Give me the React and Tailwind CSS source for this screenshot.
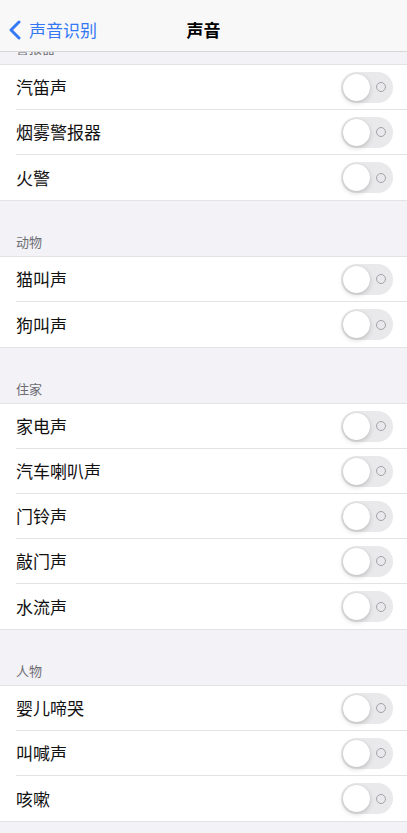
import React from 'react';

const sections = [
  { title: '动物', items: ['猫叫声', '狗叫声'] },
  { title: '住家', items: ['家电声', '汽车喇叭声', '门铃声', '敲门声', '水流声'] },
  { title: '人物', items: ['婴儿啼哭', '叫喊声', '咳嗽'] },
];

function Toggle() {
  return (
    <div className="relative w-[52px] h-[31px] rounded-full bg-[#e9e9eb] flex items-center shrink-0">
      <div className="ml-[2px] w-[27px] h-[27px] rounded-full bg-white shadow-[0_2px_5px_rgba(0,0,0,0.18),0_0_1px_rgba(0,0,0,0.15)]" />
      <div className="ml-[6px] w-[10px] h-[10px] rounded-full border border-[#a3a3a8]" />
    </div>
  );
}

function Row({ label, last }) {
  return (
    <div className="h-[45px] pl-4 flex">
      <div className={`flex-1 flex items-center justify-between pr-[14px] ${last ? '' : 'border-b border-[#e3e3e6]'}`}>
        <span className="text-[17px] text-[#111]">{label}</span>
        <Toggle />
      </div>
    </div>
  );
}

function Group({ items }) {
  return (
    <div className="bg-white border-y border-[#e3e3e6]">
      {items.map((it, i) => (
        <Row key={it} label={it} last={i === items.length - 1} />
      ))}
    </div>
  );
}

export default function App() {
  return (
    <div
      className="w-[407px] h-[833px] overflow-hidden bg-[#f2f2f7]"
      style={{ fontFamily: '"Noto Sans CJK SC", "Noto Sans", sans-serif' }}
    >
      <div className="h-[52px] bg-[#f8f8f8] border-b border-[#d6d6d8] flex items-center relative">
        <div className="flex items-center pl-[8px] pt-[8px] text-[#3478f6]">
          <svg width="14" height="20" viewBox="0 0 14 20" fill="none">
            <path d="M11 2 L3 10 L11 18" stroke="#3478f6" strokeWidth="3" strokeLinecap="round" strokeLinejoin="round" />
          </svg>
          <span className="ml-[7px] text-[17px]">声音识别</span>
        </div>
        <div className="absolute left-0 right-0 top-[8px] bottom-0 flex items-center justify-center pointer-events-none">
          <span className="text-[17px] font-semibold text-black">声音</span>
        </div>
      </div>

      <div className="h-[12px] overflow-hidden pl-4">
        <div className="-mt-[13px] text-[13px] text-[#6d6d72] leading-[18px]">警报器</div>
      </div>
      <Group items={['汽笛声', '烟雾警报器', '火警']} />

      {sections.map((s) => (
        <div key={s.title}>
          <div className="h-[55px] pl-4 flex items-end pb-[5px]">
            <span className="text-[13px] text-[#6d6d72]">{s.title}</span>
          </div>
          <Group items={s.items} />
        </div>
      ))}
    </div>
  );
}
